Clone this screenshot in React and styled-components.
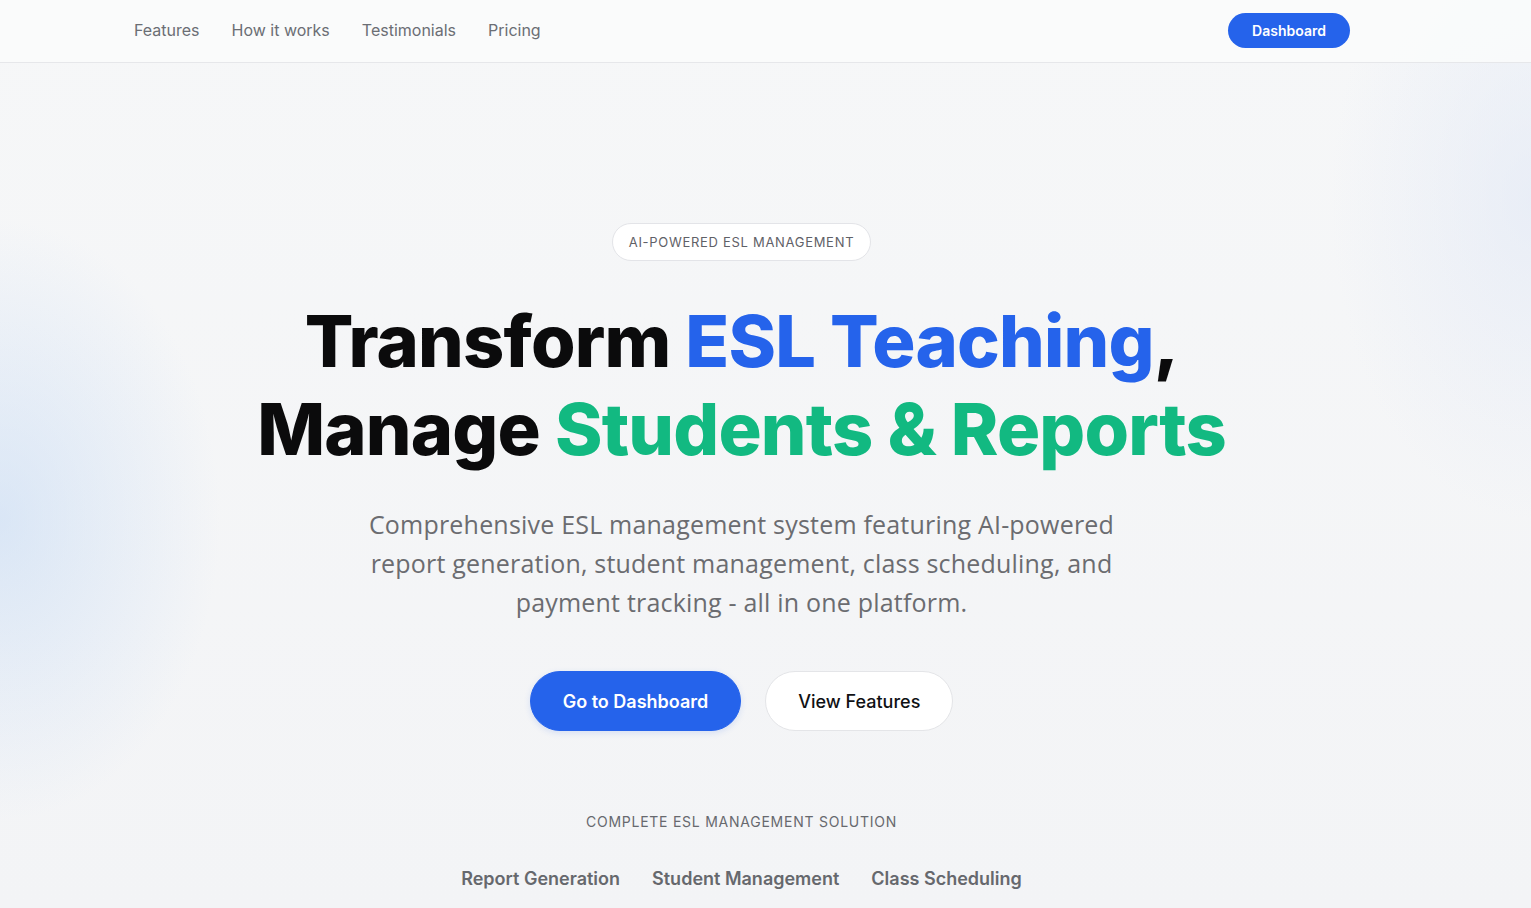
import styled, { createGlobalStyle } from "styled-components";

const GlobalStyle = createGlobalStyle`
  * { box-sizing: border-box; }
  body {
    margin: 0;
    font-family: Inter, "Liberation Sans", sans-serif;
    background: #f4f5f7;
  }
`;

const Page = styled.div`
  min-height: 908px;
  position: relative;
  overflow: hidden;
  background:
    radial-gradient(ellipse 220px 300px at 0px 520px, rgba(191, 215, 245, 0.5), rgba(191, 215, 245, 0) 100%),
    radial-gradient(ellipse 200px 320px at 1531px 200px, rgba(225, 232, 246, 0.6), rgba(225, 232, 246, 0) 100%),
    linear-gradient(180deg, #f6f7f8 0%, #f3f4f6 100%);
`;

const Nav = styled.header`
  height: 63px;
  border-bottom: 1px solid #e6e7ea;
  background: rgba(250, 251, 252, 0.85);
  display: flex;
  align-items: center;
  justify-content: space-between;
  padding: 0 181px 2px 126px;
`;

const NavLinks = styled.nav`
  display: flex;
  align-items: center;
`;

const NavLink = styled.a`
  font-size: 16px;
  color: #6b6e74;
  padding: 0 8px;
  margin-right: 16px;
  text-decoration: none;
`;

const NavButton = styled.button`
  height: 35px;
  width: 122px;
  border: none;
  border-radius: 18px;
  background: #2563eb;
  color: #fff;
  font-family: Inter, "Liberation Sans", sans-serif;
  font-weight: 600;
  font-size: 14px;
`;

const Hero = styled.main`
  display: flex;
  flex-direction: column;
  align-items: center;
  padding: 160px 48px 0 0;
`;

const Badge = styled.div`
  height: 38px;
  padding: 0 16px;
  display: flex;
  align-items: center;
  border: 1px solid #e3e4e8;
  border-radius: 19px;
  background: #fff;
  font-size: 13px;
  letter-spacing: 0.7px;
  color: #5f6167;
`;

const Title = styled.h1`
  margin: 36px 0 0;
  font-family: Inter, "Liberation Sans", sans-serif;
  font-weight: 800;
  font-size: 72px;
  line-height: 88px;
  letter-spacing: -0.8px;
  text-align: center;
  color: #0b0b0c;
`;

const Accent = styled.span`
  color: ${p => p.tone === "green" ? "#12b981" : "#2563eb"};
`;

const Lead = styled.p`
  margin: 32px 0 0;
  width: 775px;
  font-family: "Open Sans", "Liberation Sans", sans-serif;
  font-size: 25px;
  letter-spacing: 0.2px;
  line-height: 39px;
  text-align: center;
  color: #6b6c70;
`;

const Actions = styled.div`
  display: flex;
  gap: 24px;
  margin-top: 49px;
`;

const ActionButton = styled.button`
  height: 60px;
  padding: 0 32px;
  border-radius: 30px;
  border: 1px solid ${p => p.primary ? "#2563eb" : "#e4e5e8"};
  background: ${p => p.primary ? "#2563eb" : "#fff"};
  color: ${p => p.primary ? "#fff" : "#101114"};
  font-family: Inter, "Liberation Sans", sans-serif;
  font-size: 18px;
  font-weight: ${p => p.primary ? 600 : 500};
  box-shadow: ${p => p.primary ? "0 2px 6px rgba(37, 99, 235, 0.15)" : "none"};
`;

const Caption = styled.div`
  margin-top: 81px;
  font-size: 14px;
  line-height: 20px;
  letter-spacing: 0.75px;
  color: #67696e;
`;

const Solutions = styled.div`
  display: flex;
  gap: 32px;
  margin-top: 33px;
`;

const Solution = styled.span`
  font-size: 18px;
  font-weight: 600;
  line-height: 28px;
  color: #66686d;
`;

export default function App() {
  return (
    <Page>
      <GlobalStyle />
      <Nav>
        <NavLinks>
          <NavLink>Features</NavLink>
          <NavLink>How it works</NavLink>
          <NavLink>Testimonials</NavLink>
          <NavLink>Pricing</NavLink>
        </NavLinks>
        <NavButton>Dashboard</NavButton>
      </Nav>
      <Hero>
        <Badge>AI-POWERED ESL MANAGEMENT</Badge>
        <Title>
          Transform <Accent>ESL Teaching</Accent>,<br />
          Manage <Accent tone="green">Students &amp; Reports</Accent>
        </Title>
        <Lead>
          Comprehensive ESL management system featuring AI-powered report generation, student
          management, class scheduling, and payment tracking - all in one platform.
        </Lead>
        <Actions>
          <ActionButton primary>Go to Dashboard</ActionButton>
          <ActionButton>View Features</ActionButton>
        </Actions>
        <Caption>COMPLETE ESL MANAGEMENT SOLUTION</Caption>
        <Solutions>
          <Solution>Report Generation</Solution>
          <Solution>Student Management</Solution>
          <Solution>Class Scheduling</Solution>
        </Solutions>
      </Hero>
    </Page>
  );
}
